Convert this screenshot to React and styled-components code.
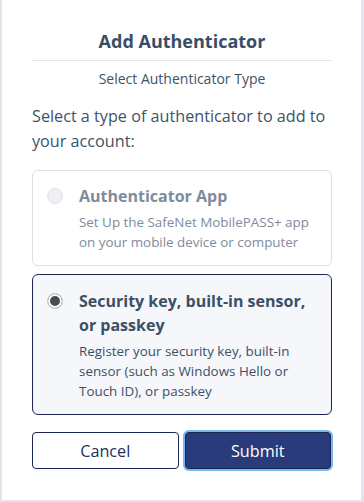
import React, { useState } from 'react'
import styled, { createGlobalStyle } from 'styled-components'

const Global = createGlobalStyle`
  html, body {
    margin: 0;
    padding: 0;
    background: #e4e5ea;
  }
  body {
    font-family: 'Open Sans', 'Noto Sans', sans-serif;
  }
`

const Frame = styled.div`
  width: 364px;
  height: 502px;
  box-sizing: border-box;
  padding: 0 3px 2px 2px;
  display: flex;
`

const Panel = styled.div`
  flex: 1;
  background: #fff;
  display: flex;
  flex-direction: column;
  padding: 27px 29px 0 30px;
  color: #3b5067;
`

const Title = styled.h1`
  margin: 0;
  font-size: 18px;
  font-weight: 700;
  line-height: 28px;
  text-align: center;
  color: #384e66;
  padding-bottom: 5px;
  border-bottom: 1px solid #e3e6ea;
`

const Sub = styled.div`
  font-size: 14px;
  line-height: 20px;
  text-align: center;
  margin-top: 8px;
  color: #3e5268;
`

const Lead = styled.p`
  margin: 15px 0 16px;
  font-size: 16.2px;
  line-height: 25px;
  color: #3e5268;
`

const Cards = styled.div`
  display: flex;
  flex-direction: column;
  gap: 8px;
`

const Card = styled.label`
  display: flex;
  gap: 16px;
  padding: ${p => (p.$selected ? '14px' : '13px')} 14px 13px 14px;
  border-radius: 6px;
  border: 1px solid ${p => (p.$selected ? '#1c2654' : '#dcdfe4')};
  background: ${p => (p.$selected ? '#f6f7fa' : '#fff')};
  color: ${p => (p.$disabled ? '#7e8b9b' : '#3b5067')};
  cursor: pointer;
`

const Radio = styled.span`
  flex: none;
  width: 16px;
  height: 16px;
  margin-top: 4px;
  border-radius: 50%;
  box-sizing: border-box;
  border: 1px solid ${p => (p.$checked ? '#c9cdd3' : '#dfe2e7')};
  background: ${p => (p.$checked ? '#474b54' : '#eef0f3')};
  box-shadow: ${p => (p.$checked ? 'inset 0 0 0 2px #fff' : 'none')};
`

const Body = styled.div`
  display: flex;
  flex-direction: column;
`

const CardTitle = styled.div`
  font-size: 16px;
  font-weight: 700;
  line-height: 24px;
  margin-bottom: 4px;
`

const CardText = styled.div`
  font-size: 13.4px;
  line-height: 20px;
`

const Actions = styled.div`
  display: flex;
  gap: 6px;
  margin-top: 17px;
`

const Button = styled.button`
  flex: 1;
  height: 37px;
  font-family: inherit;
  font-size: 16.2px;
  border-radius: 4px;
  cursor: pointer;
  border: 1px solid #1c2654;
  background: ${p => (p.$primary ? '#293b7b' : '#fff')};
  color: ${p => (p.$primary ? '#fff' : '#23305c')};
  box-shadow: ${p => (p.$primary ? '0 0 0 2px #7ab8f2' : 'none')};
  margin-right: ${p => (p.$primary ? '1px' : '0')};
`

const options = [
  {
    id: 'app',
    title: 'Authenticator App',
    text: 'Set Up the SafeNet MobilePASS+ app on your mobile device or computer',
    disabled: true,
  },
  {
    id: 'key',
    title: 'Security key, built-in sensor, or passkey',
    text: 'Register your security key, built-in sensor (such as Windows Hello or Touch ID), or passkey',
  },
]

export default function App() {
  const [value, setValue] = useState('key')
  return (
    <Frame>
      <Global />
      <Panel>
        <Title>Add Authenticator</Title>
        <Sub>Select Authenticator Type</Sub>
        <Lead>Select a type of authenticator to add to your account:</Lead>
        <Cards>
          {options.map(o => (
            <Card
              key={o.id}
              $selected={value === o.id}
              $disabled={o.disabled}
              onClick={() => !o.disabled && setValue(o.id)}
            >
              <Radio $checked={value === o.id} />
              <Body>
                <CardTitle>{o.title}</CardTitle>
                <CardText>{o.text}</CardText>
              </Body>
            </Card>
          ))}
        </Cards>
        <Actions>
          <Button>Cancel</Button>
          <Button $primary>Submit</Button>
        </Actions>
      </Panel>
    </Frame>
  )
}
